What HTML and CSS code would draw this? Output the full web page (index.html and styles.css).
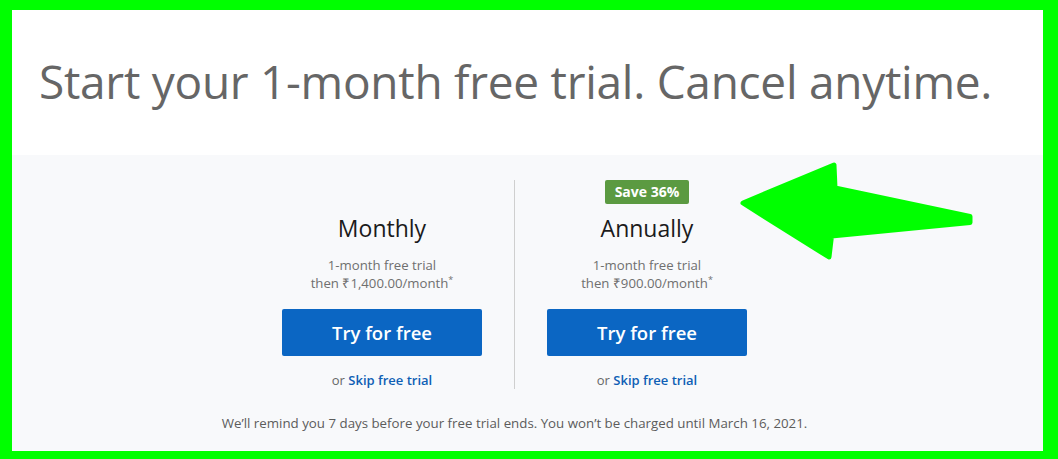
FILE: index.html
```html
<!DOCTYPE html>
<html lang="en">
<head>
<meta charset="utf-8">
<title>Start your free trial</title>
<link rel="stylesheet" href="styles.css">
</head>
<body>
<div class="frame">
  <header class="hero">
    <h1 class="hero-title">Start your 1-month free trial. Cancel anytime.</h1>
  </header>
  <section class="plans">
    <div class="plan-row">
      <div class="plan">
        <div class="badge-slot"></div>
        <h2 class="plan-name">Monthly</h2>
        <p class="plan-desc">1-month free trial<br>then ₹1,400.00/month<sup>*</sup></p>
        <button class="try-btn">Try for free</button>
        <p class="skip">or <a href="#" class="skip-link">Skip free trial</a></p>
      </div>
      <div class="divider"></div>
      <div class="plan">
        <div class="badge-slot"><span class="badge">Save 36%</span></div>
        <h2 class="plan-name">Annually</h2>
        <p class="plan-desc">1-month free trial<br>then ₹900.00/month<sup>*</sup></p>
        <button class="try-btn">Try for free</button>
        <p class="skip">or <a href="#" class="skip-link">Skip free trial</a></p>
      </div>
    </div>
    <p class="reminder">We’ll remind you 7 days before your free trial ends. You won’t be charged until March 16, 2021.</p>
    <svg class="arrow" width="250" height="110" viewBox="730 150 250 110" aria-hidden="true">
      <polygon points="743,203 834,165 835,188 970,216.5 970,222.5 831.5,236 829,257" fill="#00ff00" stroke="#00ff00" stroke-width="5" stroke-linejoin="round"/>
    </svg>
  </section>
</div>
</body>
</html>
```

FILE: styles.css
```css
* { box-sizing: border-box; }
html, body { margin: 0; }
body {
  background: #00ff00;
  padding: 10px 15px 8px 12px;
  font-family: "Open Sans", "Liberation Sans", sans-serif;
}
.frame {
  height: 441px;
  background: #ffffff;
  display: flex;
  flex-direction: column;
}
.hero {
  height: 145px;
  padding: 0 0 0 27px;
  display: flex;
  align-items: center;
}
.hero-title {
  margin: 0;
  font-weight: 400;
  font-size: 46px;
  color: #666666;
  letter-spacing: -0.27px;
  line-height: 60px;
  transform: translateY(-2px);
}
.plans {
  position: relative;
  flex: 1;
  background: #f8f9fb;
  padding-top: 25px;
}
.plan-row {
  display: flex;
  justify-content: center;
  padding-right: 26px;
}
.plan {
  width: 264px;
  display: flex;
  flex-direction: column;
  align-items: center;
}
.divider {
  width: 1px;
  background: #cfcfcf;
  height: 209px;
}
.badge-slot {
  height: 24px;
  display: flex;
  justify-content: center;
}
.badge {
  background: #5b9a41;
  color: #ffffff;
  font-weight: 700;
  font-size: 14px;
  line-height: 24px;
  padding: 0 10px;
  border-radius: 2px;
}
.plan-name {
  margin: 8px 0 0;
  font-weight: 400;
  font-size: 23px;
  line-height: 32px;
  color: #1b1b1b;
}
.plan-desc {
  margin: 12px 0 0;
  font-size: 13.2px;
  line-height: 18px;
  color: #6f6f6f;
  text-align: center;
}
.plan-desc sup {
  font-size: 9px;
  line-height: 0;
  vertical-align: 5px;
}
.try-btn {
  margin-top: 17px;
  width: 200px;
  height: 47px;
  border: none;
  border-radius: 2px;
  background: #0b66c3;
  color: #ffffff;
  font-family: inherit;
  font-weight: 600;
  font-size: 18.5px;
  cursor: pointer;
}
.skip {
  margin: 15px 0 0;
  font-size: 13px;
  line-height: 18px;
  color: #666666;
}
.skip-link {
  color: #0f5fb5;
  font-weight: 600;
  text-decoration: none;
}
.reminder {
  margin: 25px 0 0;
  padding-right: 26px;
  text-align: center;
  font-size: 13.3px;
  line-height: 18px;
  color: #5c5c5c;
}
.arrow {
  position: absolute;
  left: 718px;
  top: -5px;
  overflow: visible;
}
```
